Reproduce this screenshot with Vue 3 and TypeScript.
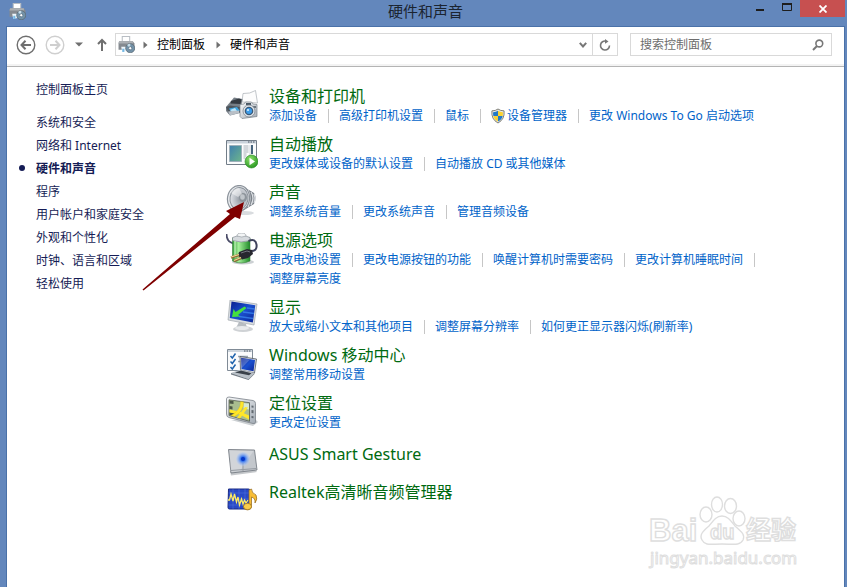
<script setup lang="ts">
import { ref } from 'vue'

interface Task {
  label: string
  shield?: boolean
}

interface Category {
  icon: string
  title: string
  tasks: Task[]
}

const query = ref('')

const crumbs: string[] = ['控制面板', '硬件和声音']

const sections: { label: string; current?: boolean }[] = [
  { label: '系统和安全' },
  { label: '网络和 Internet' },
  { label: '硬件和声音', current: true },
  { label: '程序' },
  { label: '用户帐户和家庭安全' },
  { label: '外观和个性化' },
  { label: '时钟、语言和区域' },
  { label: '轻松使用' },
]

const categories: Category[] = [
  {
    icon: 'devices',
    title: '设备和打印机',
    tasks: [
      { label: '添加设备' },
      { label: '高级打印机设置' },
      { label: '鼠标' },
      { label: '设备管理器', shield: true },
      { label: '更改 Windows To Go 启动选项' },
    ],
  },
  {
    icon: 'autoplay',
    title: '自动播放',
    tasks: [{ label: '更改媒体或设备的默认设置' }, { label: '自动播放 CD 或其他媒体' }],
  },
  {
    icon: 'sound',
    title: '声音',
    tasks: [{ label: '调整系统音量' }, { label: '更改系统声音' }, { label: '管理音频设备' }],
  },
  {
    icon: 'power',
    title: '电源选项',
    tasks: [
      { label: '更改电池设置' },
      { label: '更改电源按钮的功能' },
      { label: '唤醒计算机时需要密码' },
      { label: '更改计算机睡眠时间' },
      { label: '调整屏幕亮度' },
    ],
  },
  {
    icon: 'display',
    title: '显示',
    tasks: [
      { label: '放大或缩小文本和其他项目' },
      { label: '调整屏幕分辨率' },
      { label: '如何更正显示器闪烁(刷新率)' },
    ],
  },
  { icon: 'mobility', title: 'Windows 移动中心', tasks: [{ label: '调整常用移动设置' }] },
  { icon: 'location', title: '定位设置', tasks: [{ label: '更改定位设置' }] },
  { icon: 'touchpad', title: 'ASUS Smart Gesture', tasks: [] },
  { icon: 'audio', title: 'Realtek高清晰音频管理器', tasks: [] },
]
</script>

<template>
  <div class="window">
    <svg class="defs" width="0" height="0" aria-hidden="true">
      <defs>
        <linearGradient id="metal" x1="0" y1="0" x2="1" y2="1">
          <stop offset="0" stop-color="#fafbfc" /><stop offset="1" stop-color="#a3abb4" />
        </linearGradient>
        <linearGradient id="screen" x1="0" y1="0" x2="1" y2="1">
          <stop offset="0" stop-color="#0a1d8c" /><stop offset="0.5" stop-color="#1a50cf" /><stop offset="1" stop-color="#0b2596" />
        </linearGradient>
        <linearGradient id="picture" x1="0" y1="0" x2="1" y2="1">
          <stop offset="0" stop-color="#3f7fae" /><stop offset="1" stop-color="#6db58c" />
        </linearGradient>
        <linearGradient id="cell" x1="0" y1="0" x2="1" y2="0">
          <stop offset="0" stop-color="#2f9a35" /><stop offset="0.35" stop-color="#a5f09a" /><stop offset="1" stop-color="#1f8a28" />
        </linearGradient>
        <radialGradient id="go" cx="0.4" cy="0.3" r="0.8">
          <stop offset="0" stop-color="#8be06a" /><stop offset="1" stop-color="#1f8f1a" />
        </radialGradient>
        <radialGradient id="cone" cx="0.6" cy="0.5" r="0.6">
          <stop offset="0" stop-color="#8d949c" /><stop offset="0.5" stop-color="#b9bec5" /><stop offset="1" stop-color="#e2e5e9" />
        </radialGradient>
        <radialGradient id="touch">
          <stop offset="0" stop-color="#0a3fd0" /><stop offset="0.35" stop-color="#3a78ee" /><stop offset="1" stop-color="#b5cdf5" stop-opacity="0.3" />
        </radialGradient>
        <symbol id="printer" viewBox="0 0 16 16">
          <path d="M4 0.5h7v5H4z" fill="#fff" stroke="#b9bec4" />
          <path d="M1 5h13l1.500 2v6H0.500V7z" fill="#858a90" />
          <path d="M1 5h13v2H0.500z" fill="#acb0b4" />
          <path d="M3 10h5v4l-4 1z" fill="#eef6fb" /><path d="M4 12h2v3H4z" fill="#74b9e4" />
          <circle cx="11.500" cy="11.500" r="4.300" fill="#7392a8" stroke="#56636c" stroke-width="0.600" />
          <path d="M11.500 11.500l-3-3a4 4 0 0 1 3-1.200z" fill="#c7dde9" />
          <circle cx="11.500" cy="11.500" r="1.500" fill="#fff" stroke="#4b6577" stroke-width="0.600" />
        </symbol>
      </defs>
    </svg>

    <header class="titlebar">
      <svg class="app-icon" viewBox="0 0 16 16" aria-hidden="true"><use href="#printer" /></svg>
      <h1 class="caption">硬件和声音</h1>
      <div class="controls">
        <button class="control" type="button" aria-label="最小化">
          <svg width="10" height="12" viewBox="0 0 10 12"><path d="M1 9h8v2H1z" fill="#1d1d1d" /></svg>
        </button>
        <button class="control" type="button" aria-label="最大化">
          <svg width="10" height="12" viewBox="0 0 10 12"><path d="M0.500 4h9v6.500h-9z" fill="none" stroke="#1d1d1d" /><path d="M0 3h10v2H0z" fill="#1d1d1d" /></svg>
        </button>
        <button class="control close" type="button" aria-label="关闭">
          <svg width="8" height="8" viewBox="0 0 8 8"><path d="M0.500 0.500l7 7M7.500 0.500l-7 7" stroke="#fff" stroke-width="1.800" /></svg>
        </button>
      </div>
    </header>

    <div class="client">
      <nav class="toolbar" aria-label="导航">
        <button class="tool round" type="button" aria-label="后退">
          <svg width="20" height="20" viewBox="0 0 20 20" fill="none" stroke="#6f6f6f">
            <circle cx="10" cy="10" r="8.800" stroke-width="1.400" /><path d="M15 10H6M9.500 5.800L5.500 10l4 4.200" stroke-width="2" />
          </svg>
        </button>
        <button class="tool round" type="button" aria-label="前进">
          <svg width="20" height="20" viewBox="0 0 20 20" fill="none" stroke="#cfcfcf">
            <circle cx="10" cy="10" r="8.800" stroke-width="1.400" /><path d="M5 10h9M10.500 5.800l4 4.200-4 4.200" stroke-width="2" />
          </svg>
        </button>
        <button class="tool recent" type="button" aria-label="最近的位置">
          <svg width="8" height="5" viewBox="0 0 8 5"><path d="M0 0.500h8L4 4.500z" fill="#6f6f6f" /></svg>
        </button>
        <button class="tool up" type="button" aria-label="向上">
          <svg width="10" height="13" viewBox="0 0 10 13" fill="none" stroke="#6f6f6f" stroke-width="2"><path d="M5 13V2M1 6l4-4 4 4" /></svg>
        </button>
        <div class="address">
          <svg class="place" viewBox="0 0 16 16" aria-hidden="true"><use href="#printer" /></svg>
          <template v-for="crumb in crumbs" :key="crumb">
            <svg class="chevron" width="5" height="8" viewBox="0 0 5 8" aria-hidden="true"><path d="M0.500 0.500L4.500 4l-4 3.500z" fill="#6f6f6f" /></svg>
            <a class="crumb" href="#">{{ crumb }}</a>
          </template>
          <button class="tool drop" type="button" aria-label="上一个位置">
            <svg width="8" height="6" viewBox="0 0 8 6" fill="none" stroke="#777" stroke-width="2"><path d="M0.800 0.800L4 4.500 7.200 0.800" /></svg>
          </button>
          <button class="tool refresh" type="button" aria-label="刷新">
            <svg width="12" height="12" viewBox="0 0 12 12" fill="none" stroke="#777" stroke-width="1.600"><path d="M10.500 6.500A4.500 4.500 0 1 1 7 2.100" /><path d="M6 0v4.800L9.500 2.400z" fill="#777" stroke="none" /></svg>
          </button>
        </div>
        <form class="search" role="search" @submit.prevent>
          <input v-model="query" class="query" type="search" placeholder="搜索控制面板" aria-label="搜索控制面板" />
          <button class="tool find" type="submit" aria-label="搜索">
            <svg width="12" height="12" viewBox="0 0 12 12" fill="none" stroke="#777"><circle cx="7.300" cy="4.500" r="3.400" stroke-width="1.600" /><path d="M5 7L1 11" stroke-width="2" /></svg>
          </button>
        </form>
      </nav>

      <div class="body">
        <aside class="side">
          <a class="side-link home" href="#">控制面板主页</a>
          <ul class="sections">
            <li v-for="section in sections" :key="section.label">
              <a class="side-link" :class="{ current: section.current }" href="#">{{ section.label }}</a>
            </li>
          </ul>
        </aside>

        <main class="categories">
          <section v-for="cat in categories" :key="cat.icon" class="category" :class="{ single: !cat.tasks.length }">
            <svg class="icon" viewBox="0 0 32 32" aria-hidden="true">
              <g v-if="cat.icon === 'devices'">
                <path d="M17 4.500Q24 5 29.500 1.500L31.500 14 16 13z" fill="#fdfdfd" stroke="#a8adb3" stroke-width="0.700" />
                <path d="M0 18L8 8.500l8.500 1.500L14 24 4 26.500 0 22z" fill="#777f87" />
                <path d="M5 12l8-2.500 2.500 1-1 4.500-10-.5z" fill="#343a41" />
                <path d="M0 18l4-1.500 10 1.500v5L3 25z" fill="#4d555d" />
                <path d="M3 19.500l8-1.500 3 4-8 3z" fill="#3fa4df" /><path d="M4 21l5-2 2 3-4 1.500z" fill="#bfe5f8" />
                <path d="M2 22.500l11-1v2.500l-9 2.500z" fill="#b9c0c7" />
                <path d="M14 15.500l4-.5 1.500-2h6l1.500 2 4 .5v12L16 29.500l-2-2z" fill="url(#metal)" stroke="#7a828a" stroke-width="0.700" />
                <path d="M20 14h5v2h-5z" fill="#4b5864" /><path d="M27 17h3v2h-3z" fill="#6b747d" />
                <circle cx="23" cy="22" r="6" fill="#dfe4e9" stroke="#7c858e" stroke-width="0.800" />
                <circle cx="23" cy="22" r="4.300" fill="#3a5876" /><circle cx="23" cy="22" r="3" fill="#3c9be8" /><circle cx="22" cy="21" r="1.100" fill="#d9f0ff" />
              </g>
              <g v-else-if="cat.icon === 'autoplay'">
                <path d="M0.500 3.500h30v24H0.500z" fill="#fbfcfd" stroke="#727d88" />
                <path d="M1 4h29v2.500H1z" fill="#c9d2db" /><path d="M22 5h1.500M24.500 5H26M27 5h1.500" stroke="#4b5560" />
                <path d="M3.500 8.500h12v16h-12z" fill="url(#picture)" stroke="#9db0ba" />
                <path d="M17.500 9h5M17.500 11h5M17.500 13h5M17.500 15h5M17.500 17h3M17.500 19h3M17.500 21h2" stroke="#a9b1b9" />
                <path d="M26 8v9" stroke="#46647d" stroke-width="2" /><path d="M24 8v14" stroke="#d0d6dc" />
                <circle cx="25.500" cy="24.500" r="6.500" fill="url(#go)" stroke="#278a20" stroke-width="0.600" /><path d="M23.500 20.800v7.400l5.500-3.700z" fill="#fff" />
              </g>
              <g v-else-if="cat.icon === 'sound'">
                <ellipse cx="18" cy="28" rx="10" ry="2" fill="#d9dcdf" />
                <path d="M14 1l9 4 5 3q3 5 0 11l-5 3-8 5z" fill="#7c838b" />
                <path d="M22 5q4 8 0 17M25 7q4 6 0 13M28 9q2 5 0 9" fill="none" stroke="#dde0e4" stroke-width="1.300" />
                <ellipse cx="12.500" cy="13.500" rx="11" ry="13" fill="#e8ebee" stroke="#8b929a" stroke-width="1.200" transform="rotate(10 12.500 13.500)" />
                <ellipse cx="13" cy="13.500" rx="9" ry="11" fill="url(#cone)" stroke="#8b929a" transform="rotate(10 13 13.500)" />
                <ellipse cx="17" cy="12.500" rx="4" ry="4.500" fill="#8d949b" /><ellipse cx="16.500" cy="12" rx="2.300" ry="2.800" fill="#c1c6cb" />
                <path d="M5 8q3-5 8-5l3 6-4 3z" fill="#fff" opacity="0.450" />
              </g>
              <g v-else-if="cat.icon === 'power'">
                <ellipse cx="17" cy="29" rx="11" ry="2.500" fill="#ccd0d3" />
                <path d="M0.500 1q0 8 7 9.500" fill="none" stroke="#4a4c68" stroke-width="1.800" />
                <path d="M6.500 5v23q9 4 17.500 0V5z" fill="url(#cell)" stroke="#3b7f3c" stroke-width="0.600" />
                <path d="M6.500 4.500q9-4 17.500 0v3q-9 3-17.500 0z" fill="#d6dade" stroke="#7b838b" stroke-width="0.600" />
                <path d="M11 3q0-3 4.500-3T20 3q-4 2-9 0z" fill="#f3f5f6" stroke="#8d949b" stroke-width="0.600" />
                <path d="M9 8v17" stroke="#d8ffd0" stroke-width="1.500" opacity="0.700" />
                <path d="M22.500 8q7-3 8 3.500T25 18" fill="none" stroke="#3f425c" stroke-width="2" />
                <path d="M13 19l8-3 5 1 1 4-5 4-6 1.500-4-4z" fill="#27272f" /><path d="M15 20l6-2 3 1" stroke="#71727e" fill="none" />
                <path d="M13 22l-8 2.500M15 25l-7 3" stroke="#8a6c35" stroke-width="2.600" /><path d="M13 21.500l-8 2.500M15 24.500l-7 3" stroke="#f1d694" stroke-width="1.300" />
              </g>
              <g v-else-if="cat.icon === 'display'">
                <ellipse cx="17" cy="29" rx="10" ry="3" fill="#cfd2d5" /><path d="M13 22l7 2 1 4q-5 3-11 0z" fill="#b8bdc2" /><ellipse cx="16" cy="28" rx="7" ry="2" fill="#e8eaec" />
                <path d="M4 0l27 4-3 21L2 20z" fill="#d9dde1" stroke="#979da4" stroke-width="0.600" />
                <path d="M5.500 1.500L29.300 5.200 26.800 22.500 3.800 18z" fill="url(#screen)" />
                <path d="M21 8l7.500 1M17 12l11 1.500M13 16.500l14 2" stroke="#3f8df5" stroke-width="1.300" opacity="0.700" />
                <path d="M18.500 6.500l2 1.500-8.500 7 2.500 1.500-8.500.5 1.500-8 2 3z" fill="#45df3f" />
              </g>
              <g v-else-if="cat.icon === 'mobility'">
                <path d="M1.500 1.500h25v21h-25z" fill="#fafbfc" stroke="#808b96" /><path d="M2 2h24v2H2z" fill="#cdd5dd" /><path d="M18 3h1.500M20.500 3H22M23 3h1.500" stroke="#4b5560" />
                <path d="M4.500 8l1.800 2L9.500 5.500M4.500 13.500l1.800 2L9.500 11M4.500 19l1.800 2 3.200-4.500" fill="none" stroke="#1f63ad" stroke-width="1.500" />
                <path d="M12 8.500h10M12 13.500h4" stroke="#9aa7b5" stroke-width="1.300" />
                <path d="M14 8.500l16.500 2.500-2 14L14.500 22z" fill="#d7dbe0" stroke="#3f464e" stroke-width="0.700" />
                <path d="M15 9.800l14 2.200-1.500 11.200L15.500 21z" fill="url(#screen)" /><path d="M15 10l9 1.500-8.500 9z" fill="#fff" opacity="0.220" />
                <path d="M5 25l9.500-3.500 14 3.500-6 6z" fill="#b9c0c7" /><path d="M9 24.500l6-2 10.500 2.800-2.500 2z" fill="#3a4149" /><path d="M5 25l17.500 6v1L5 26.500zM22.500 31l6-6v1l-6 6z" fill="#747d86" />
              </g>
              <g v-else-if="cat.icon === 'location'">
                <path d="M5 24l22 6 5-4-3-3z" fill="#ccd0d3" />
                <path d="M3 1l24 3.500q2.500.5 2.500 3V26q0 2-2.500 1.500L3 21.500Q0.500 21 .5 18V3Q.500 1 3 1z" fill="url(#metal)" stroke="#7b8289" stroke-width="0.800" />
                <path d="M3 3.800l20.500 2.900v18.600L3 19.600z" fill="#a9bd8f" stroke="#454c44" stroke-width="0.700" />
                <path d="M3.500 4.500l4 .5v3l-4-.5zM3.500 10l3 .5v3l-3-.5zM3.500 16l5 1.300v3L3.500 19z" fill="#4b5646" />
                <path d="M17.500 7l5.500.8v5.700l-5.500-1z" fill="#d7e9d3" />
                <path d="M3.500 13.500L15 16l8 3.500v4L14 18.500l-10.500-2z" fill="#ffe72a" />
                <path d="M14.500 5.500l3 .4Q18 15 8.500 20.500l-3.500-1Q15 14 14.500 5.500z" fill="#ffe72a" stroke="#e0b800" stroke-width="0.300" />
                <path d="M19 11l3 .5-8 11-3-.8z" fill="#ffe72a" />
                <path d="M25.500 9.500l2 .3v2l-2-.3zM25.500 14l2 .3v3l-2-.3zM25.500 20l2 .3v2l-2-.3z" fill="#626a71" />
              </g>
              <g v-else-if="cat.icon === 'touchpad'">
                <path d="M4 27l25-1 2 2-26 3.500z" fill="#c5c8cb" />
                <path d="M2.500 5.500l26 .5 2.500 20L5 29z" fill="#c3c7cc" stroke="#777d84" stroke-width="0.900" /><path d="M3.500 6.500l24 .5L14 27l-9 1z" fill="#fff" opacity="0.250" />
                <path d="M17 19v8M5 26.500l25-2" stroke="#959ba2" />
                <circle cx="17" cy="15" r="7" fill="url(#touch)" /><circle cx="17" cy="15" r="2" fill="#0738c7" />
              </g>
              <g v-else>
                <path d="M2.500 7h20q1.500 0 1.500 1.500v17q0 1.500-1.500 1.500h-19Q2 27 2 25.500z" fill="#2949c5" stroke="#1b2b83" /><path d="M2.500 11h21M2.500 17h21M2.500 23h21M7 7v20M13 7v20M19 7v20" stroke="#5777e3" stroke-width="0.500" />
                <path d="M2 18h1.500l1.500-6 2 7 1.500-7 2 8 1.500-5 1.500 8 2-6 1.500 5 1.500-4 1.500 3 2-3" fill="none" stroke="#ffec62" stroke-width="1.300" />
                <path d="M23 8l2.500-1q0 4 4.500 6 2 4-1 8 .5-5-3.500-6v10a4 3 0 1 1-2.500-3z" fill="#f7bd36" stroke="#8f651a" stroke-width="0.700" />
                <ellipse cx="21.500" cy="24.500" rx="4" ry="3.200" fill="#f9cc4b" stroke="#936919" stroke-width="0.700" />
              </g>
            </svg>
            <div class="text">
              <h2 class="title"><a href="#">{{ cat.title }}</a></h2>
              <ul v-if="cat.tasks.length" class="tasks">
                <li v-for="task in cat.tasks" :key="task.label" class="task">
                  <a href="#">
                    <svg v-if="task.shield" class="shield" viewBox="0 0 15 16" aria-hidden="true">
                      <path d="M7.500 0.500Q10 2.500 14 2.500q1 9-6.500 13Q0 11.500 1 2.500q4 0 6.500-2z" fill="#e9e9e4" stroke="#77776f" />
                      <path d="M7.500 2.500V8H2.500q-.5-2-.2-4Q5.500 4 7.500 2.500zM7.500 8h5q-.8 4-5 6z" fill="#2379c8" />
                      <path d="M7.500 2.500V8h5q.5-2 .2-4-3 0-5.200-1.500zM7.500 8h-5q.8 4 5 6z" fill="#fad232" />
                    </svg>{{ task.label }}</a>
                </li>
              </ul>
            </div>
          </section>
        </main>
      </div>
    </div>

    <svg class="pointer" viewBox="0 0 104 90" aria-hidden="true">
      <path d="M0.500 88.500L88 13l-4-3L102 1 98 18l-5-2L1.500 89.500z" fill="#7f0000" />
    </svg>

    <svg class="watermark" viewBox="0 0 156 76" role="img" aria-label="Baidu 经验">
      <g fill="#fff" stroke="#dedede" stroke-width="1.400">
        <ellipse cx="58" cy="18.500" rx="6" ry="7.500" />
        <ellipse cx="69" cy="8.500" rx="5.500" ry="7.500" />
        <ellipse cx="82.500" cy="10" rx="6" ry="7.500" />
        <ellipse cx="91" cy="22.500" rx="6" ry="7.500" />
        <path d="M74 20c6 0 9 5 13 10 8 7 10 9 8 14-3 6-10 4-21 4s-17 2-20-4c-3-5 1-9 7-14 4-5 7-10 13-10z" />
        <text class="mark" x="1" y="45" font-size="31">Bai</text>
        <text class="mark" x="62" y="43" font-size="20">du</text>
        <text class="mark cjk" x="98" y="43" font-size="25">经验</text>
        <text class="url" x="2" y="68" font-size="17">jingyan.baidu.com</text>
      </g>
    </svg>
  </div>
</template>

<style>
body {
  margin: 0;
  background: #6387bc;
}
</style>

<style scoped>
.window {
  position: relative;
  display: flex;
  flex-direction: column;
  box-sizing: border-box;
  min-height: 100vh;
  padding: 0 2px 0 6px;
  overflow: hidden;
  background: #6387bc;
  color: #000;
  font: 12px/20px "Noto Sans", "Noto Sans CJK SC", sans-serif;
}

.defs {
  position: absolute;
}

.titlebar {
  display: grid;
  grid-template-columns: 1fr auto 1fr;
  height: 26px;
}

.app-icon {
  width: 17px;
  height: 17px;
  margin: 3px 0 0 3px;
}

.caption {
  margin: 0;
  color: #1b2430;
  font-size: 15px;
  font-weight: 400;
  line-height: 22px;
}

.controls {
  display: flex;
  align-items: flex-start;
  justify-content: flex-end;
}

.control,
.tool {
  display: flex;
  align-items: center;
  justify-content: center;
  padding: 0;
  border: 0;
  background: none;
}

.control {
  width: 27px;
  height: 12px;
}

.close {
  width: 45px;
  height: 17px;
  background: #c75050;
}

.client {
  flex: 1;
  border: 1px solid #4a71a8;
  border-bottom: 0;
  background: #fff;
}

.toolbar {
  display: flex;
  align-items: center;
  box-sizing: border-box;
  height: 40px;
  padding: 0 12px 4px 9px;
  border-bottom: 1px solid #b4b4b4;
  box-shadow: inset 0 -2px 0 #f3f3f3;
}

.round {
  width: 20px;
  height: 20px;
  margin-right: 9px;
}

.recent {
  width: 10px;
  height: 20px;
}

.up {
  width: 10px;
  height: 20px;
  margin: 0 8px 0 13px;
}

.address,
.search {
  display: flex;
  align-items: center;
  box-sizing: border-box;
  height: 23px;
  border: 1px solid #d9d9d9;
}

.address {
  flex: 1;
}

.place {
  width: 17px;
  height: 17px;
  margin: 0 8px 0 2px;
}

.crumb {
  margin: 0 11px 0 9px;
  color: #000;
  text-decoration: none;
}

.drop {
  width: 18px;
  height: 20px;
  margin-left: auto;
}

.refresh {
  align-self: stretch;
  width: 25px;
  border-left: 1px solid #d9d9d9;
}

.search {
  width: 202px;
  margin-left: 12px;
}

.query {
  flex: 1;
  min-width: 0;
  padding: 0 0 0 9px;
  border: 0;
  outline: 0;
  background: none;
  color: #000;
  font: inherit;
  appearance: none;
}

.query::placeholder {
  color: #6d6d6d;
  opacity: 1;
}

.find {
  width: 26px;
  height: 20px;
}

.body {
  display: flex;
}

.side {
  flex: 0 0 190px;
  padding: 11px 0 0 29px;
}

.sections,
.tasks {
  margin: 0;
  padding: 0;
  list-style: none;
}

.side-link {
  display: block;
  color: #151c55;
  line-height: 23px;
  text-decoration: none;
}

.home {
  margin-bottom: 10px;
}

.current {
  position: relative;
  font-weight: 700;
}

.current::before {
  position: absolute;
  top: 8px;
  left: -17px;
  width: 6px;
  height: 6px;
  border-radius: 50%;
  background: #151c55;
  content: "";
}

.categories {
  flex: 1;
  min-width: 0;
  padding: 19px 40px 24px 0;
}

.category {
  display: flex;
  gap: 11px;
  padding-bottom: 9px;
}

.icon {
  flex: none;
  width: 32px;
  height: 32px;
  margin-top: 3px;
}

.title {
  margin: 0;
  font-size: 16px;
  font-weight: 400;
  line-height: 20px;
}

.title a {
  color: #006a10;
  text-decoration: none;
}

.single {
  padding-bottom: 3px;
}

.single .title {
  line-height: 26px;
}

.tasks {
  display: flex;
  flex-wrap: wrap;
}

.task {
  display: flex;
  align-items: center;
  height: 19px;
  white-space: nowrap;
}

.task a {
  display: flex;
  align-items: center;
  color: #0063c9;
  text-decoration: none;
}

.task:not(:last-child)::after {
  width: 1px;
  height: 14px;
  margin: 0 10px 0 11px;
  background: #c6c6c6;
  content: "";
}

.shield {
  width: 14px;
  height: 16px;
  margin-right: 2px;
}

.pointer {
  position: absolute;
  top: 201px;
  left: 142px;
  width: 104px;
  height: 90px;
  pointer-events: none;
}

.watermark {
  position: absolute;
  right: 43px;
  bottom: 15px;
  width: 156px;
  height: 76px;
  pointer-events: none;
}

.mark {
  font-family: "Liberation Sans", sans-serif;
  font-weight: 700;
}

.cjk {
  font-family: "Noto Sans CJK SC", sans-serif;
}

.url {
  font-family: "Noto Sans", sans-serif;
  stroke-width: 1px;
}
</style>
